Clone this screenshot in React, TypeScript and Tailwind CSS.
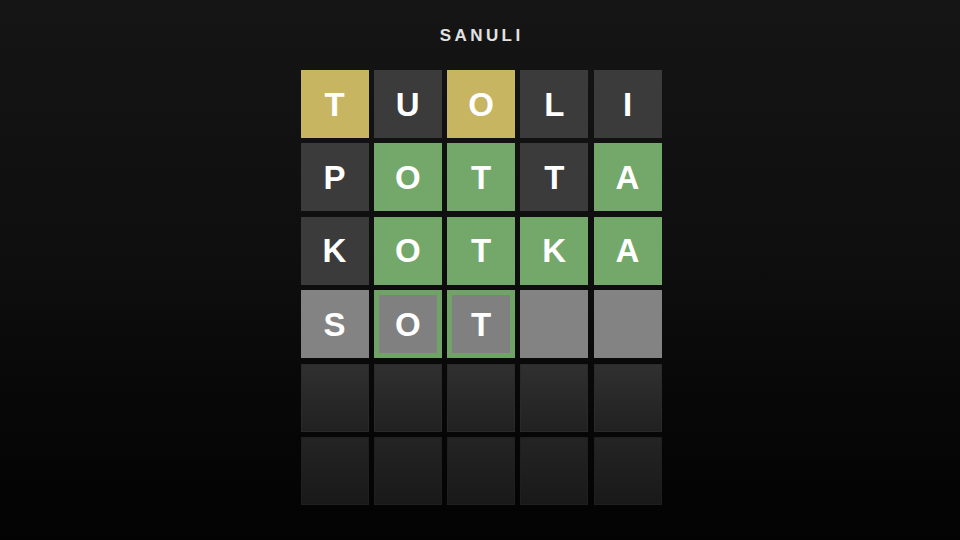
type TileState = "present" | "absent" | "correct" | "typed" | "typedHint" | "empty" | "emptyDeep";

interface Tile {
  letter: string;
  state: TileState;
}

const rows: Tile[][] = [
  [
    { letter: "T", state: "present" },
    { letter: "U", state: "absent" },
    { letter: "O", state: "present" },
    { letter: "L", state: "absent" },
    { letter: "I", state: "absent" },
  ],
  [
    { letter: "P", state: "absent" },
    { letter: "O", state: "correct" },
    { letter: "T", state: "correct" },
    { letter: "T", state: "absent" },
    { letter: "A", state: "correct" },
  ],
  [
    { letter: "K", state: "absent" },
    { letter: "O", state: "correct" },
    { letter: "T", state: "correct" },
    { letter: "K", state: "correct" },
    { letter: "A", state: "correct" },
  ],
  [
    { letter: "S", state: "typed" },
    { letter: "O", state: "typedHint" },
    { letter: "T", state: "typedHint" },
    { letter: "", state: "typed" },
    { letter: "", state: "typed" },
  ],
  Array.from({ length: 5 }, () => ({ letter: "", state: "empty" as TileState })),
  Array.from({ length: 5 }, () => ({ letter: "", state: "emptyDeep" as TileState })),
];

const stateClasses: Record<TileState, string> = {
  present: "bg-[#c8b562]",
  absent: "bg-[#3b3b3b]",
  correct: "bg-[#74a86a]",
  typed: "bg-[#838383]",
  typedHint: "bg-[#808080] border-[5px] border-[#6fa466]",
  empty: "bg-gradient-to-b from-[#303030] to-[#212121] border border-[#2a2a2a]",
  emptyDeep: "bg-gradient-to-b from-[#242424] to-[#191919] border border-[#1f1f1f]",
};

function LetterTile({ tile }: { tile: Tile }) {
  return (
    <div
      className={`w-[68px] h-[68px] flex items-center justify-center text-white font-bold text-[33px] leading-none ${stateClasses[tile.state]}`}
    >
      {tile.letter}
    </div>
  );
}

export default function App() {
  return (
    <div
      className="w-[960px] h-[540px] bg-gradient-to-b from-[#151515] via-[#0e0e0e] to-[#030303] flex flex-col items-center pt-[26px]"
      style={{ fontFamily: '"Liberation Sans", Arial, sans-serif' }}
    >
      <h1 className="h-[20px] leading-[20px] text-[17px] font-bold tracking-[0.2em] pl-[0.2em] text-[#e2e2e2]">
        SANULI
      </h1>
      <div className="mt-[24px] ml-[2px] grid grid-cols-5 gap-x-[5.25px] gap-y-[5.4px]">
        {rows.map((row, r) =>
          row.map((tile, c) => <LetterTile key={`${r}-${c}`} tile={tile} />)
        )}
      </div>
    </div>
  );
}
